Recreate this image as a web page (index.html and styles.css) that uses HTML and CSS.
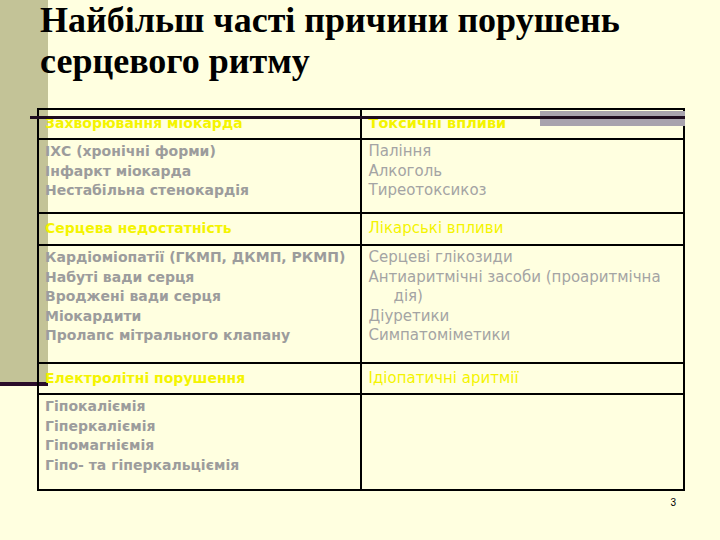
FILE: index.html
```html
<!DOCTYPE html>
<html lang="uk">
<head>
<meta charset="utf-8">
<title>Найбільш часті причини порушень серцевого ритму</title>
<link rel="stylesheet" href="styles.css">
</head>
<body>
<div class="slide">
  <p class="heading">Найбільш часті причини порушень<br>серцевого ритму</p>
  <table class="causes">
    <tr class="head r1">
      <td class="left">Захворювання міокарда</td>
      <td class="right">Токсичні впливи</td>
    </tr>
    <tr class="body r2">
      <td class="left">ІХС (хронічні форми)<br>Інфаркт міокарда<br>Нестабільна стенокардія</td>
      <td class="right">Паління<br>Алкоголь<br>Тиреотоксикоз</td>
    </tr>
    <tr class="head r3">
      <td class="left">Серцева недостатність</td>
      <td class="right thin">Лікарські впливи</td>
    </tr>
    <tr class="body r4">
      <td class="left">Кардіоміопатії (ГКМП, ДКМП, РКМП)<br>Набуті вади серця<br>Вроджені вади серця<br>Міокардити<br>Пролапс мітрального клапану</td>
      <td class="right">Серцеві глікозиди<br>Антиаритмічні засоби (проаритмічна<br><span class="hang">дія)</span><br>Діуретики<br>Симпатоміметики</td>
    </tr>
    <tr class="head r5">
      <td class="left">Електролітні порушення</td>
      <td class="right thin">Ідіопатичні аритмії</td>
    </tr>
    <tr class="body r6">
      <td class="left">Гіпокаліємія<br>Гіперкаліємія<br>Гіпомагніємія<br>Гіпо- та гіперкальціємія</td>
      <td class="right"></td>
    </tr>
  </table>
  <div class="pagenum">3</div>
  <div class="deco-bar"></div>
  <div class="deco-line"></div>
</div>
</body>
</html>
```
FILE: styles.css
```css
html, body {
  margin: 0;
  padding: 0;
  background: #ffffe0;
}
.slide {
  position: relative;
  width: 720px;
  height: 540px;
  overflow: hidden;
  background:
    linear-gradient(#2a0c2a, #2a0c2a) 0 382px / 48px 4px no-repeat,
    linear-gradient(#c3c397, #c3c397) 0 0 / 48px 382px no-repeat,
    #ffffe0;
}
.heading {
  margin: 0;
  padding: 0 0 0 40px;
  font-family: "Liberation Serif";
  font-weight: bold;
  font-size: 36px;
  line-height: 41px;
  height: 78px;
  color: #000;
}
.causes {
  margin: 30px 0 0 37px;
  border-collapse: collapse;
  width: 648px;
  table-layout: fixed;
  font-family: "DejaVu Sans", Verdana, sans-serif;
  font-size: 14px;
  line-height: 19.5px;
}
.causes td {
  border: 2px solid #000;
  padding: 2px 6px 0 6px;
  vertical-align: top;
  width: 50%;
  color: #9c9c9c;
}
.causes td.right {
  padding-left: 7px;
  font-size: 15px;
  color: #a4a4a4;
}
.causes td.left {
  font-weight: bold;
}
.head td {
  color: #f4f400;
  font-weight: bold;
  vertical-align: middle;
  padding-top: 0;
}
.head td.right {
  color: #f4f400;
  font-size: 14.5px;
}
.head td.thin {
  font-weight: normal;
  font-size: 15px;
}
.r1 { height: 30px; }
.r2 { height: 74px; }
.r3 { height: 32px; }
.r4 { height: 118px; }
.r5 { height: 31px; }
.r6 { height: 96px; }
.hang {
  padding-left: 25px;
}
.pagenum {
  margin: 6px 0 0 0;
  padding-right: 44px;
  text-align: right;
  font-family: "Liberation Sans", Arial, sans-serif;
  font-size: 10px;
  line-height: 12px;
  color: #000;
}
.deco-bar {
  position: absolute;
  left: 540px;
  top: 111px;
  width: 145px;
  height: 15px;
  background: #a8a3ad;
}
.deco-line {
  position: absolute;
  left: 30px;
  top: 116px;
  width: 655px;
  height: 3px;
  background: #1e0c1e;
}
```
